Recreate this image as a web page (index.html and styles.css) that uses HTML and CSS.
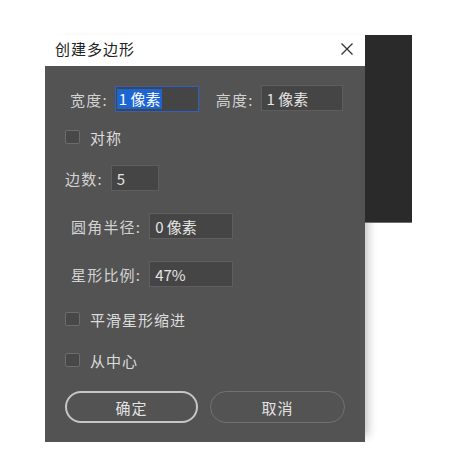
FILE: index.html
```html
<!DOCTYPE html>
<html lang="zh">
<head>
<meta charset="utf-8">
<title>创建多边形</title>
<link rel="stylesheet" href="styles.css">
</head>
<body>
<div class="stage">
  <div class="dialog">
    <div class="titlebar">
      <span class="title">创建多边形</span>
      <svg class="close" width="14" height="14" viewBox="0 0 14 14"><path d="M1.5 1.5 L12.5 12.5 M12.5 1.5 L1.5 12.5" stroke="#333" stroke-width="1.3" fill="none"/></svg>
    </div>
    <div class="panel">
      <div class="row row-size">
        <span class="label">宽度:</span>
        <div class="input w84 focused"><span class="sel">1&nbsp;像素</span></div>
        <span class="label lbl-h">高度:</span>
        <div class="input w82 shift-up">1&nbsp;像素</div>
      </div>
      <div class="check c1"><span class="box"></span><span class="ctext">对称</span></div>
      <div class="row r-sides">
        <span class="label">边数:</span>
        <div class="input w48 g8">5</div>
      </div>
      <div class="row r-radius">
        <span class="label l2">圆角半径:</span>
        <div class="input w84 g8">0&nbsp;像素</div>
      </div>
      <div class="row r-star">
        <span class="label l2">星形比例:</span>
        <div class="input w84 g8">47%</div>
      </div>
      <div class="check c2"><span class="box"></span><span class="ctext">平滑星形缩进</span></div>
      <div class="check c3"><span class="box"></span><span class="ctext">从中心</span></div>
      <div class="buttons">
        <div class="btn primary">确定</div>
        <div class="btn">取消</div>
      </div>
    </div>
  </div>
  <div class="dark"></div>
</div>
</body>
</html>
```
FILE: styles.css
```css
html, body {
  margin: 0;
  padding: 0;
  background: #ffffff;
}
body {
  font-family: "Noto Sans CJK SC", "Noto Sans", sans-serif;
}
.stage {
  display: flex;
  align-items: flex-start;
  padding: 35px 0 0 45px;
}
.dialog {
  width: 320px;
  position: relative;
  box-shadow: 9px 0 9px -6px rgba(0,0,0,0.25);
}
.dark {
  width: 47px;
  height: 188px;
  background: #2a2a2a;
  border-bottom: 1px solid #6d6d6d;
  box-sizing: border-box;
  position: relative;
}
.titlebar {
  height: 31px;
  background: #ffffff;
  display: flex;
  align-items: center;
  justify-content: space-between;
  padding: 0 11px 0 10px;
}
.title {
  font-size: 15px;
  color: #222;
  letter-spacing: 1px;
  margin-top: -4px;
}
.close {
  margin-top: -3px;
}
.panel {
  background: #535353;
  height: 376px;
  padding: 20px 0 0 20px;
  box-sizing: border-box;
}
.row {
  display: flex;
  align-items: center;
  height: 26px;
}
.row-size {
  margin-left: 5px;
}
.label {
  font-size: 15px;
  color: #d2d2d2;
  letter-spacing: 1.2px;
  white-space: nowrap;
}
.l2 {
  margin-left: 6px;
}
.lbl-h {
  margin-left: 17px;
}
.input {
  height: 26px;
  box-sizing: border-box;
  background: #454545;
  border: 1px solid #5e5e5e;
  color: #e6e6e6;
  font-size: 15px;
  display: flex;
  align-items: center;
  padding-left: 5px;
  margin-left: 7px;
  white-space: nowrap;
}
.shift-up {
  position: relative;
  top: -1px;
}
.w84 { width: 84px; }
.w82 { width: 82px; }
.w48 { width: 48px; }
.g8 { margin-left: 8px; }
.focused {
  border: 1.5px solid #2d61c4;
  padding-left: 1px;
}
.sel {
  background: #1c66d4;
  color: #ffffff;
  padding: 0 2px 0 2px;
  line-height: 20px;
}
.check {
  display: flex;
  align-items: center;
  height: 14px;
}
.box {
  width: 15px;
  height: 14px;
  box-sizing: border-box;
  border: 1px solid #6c6c6c;
  background: #484848;
  border-radius: 2px;
}
.ctext {
  font-size: 15px;
  color: #dcdcdc;
  margin-left: 10px;
  letter-spacing: 1px;
}
.c1 { margin-top: 18px; }
.r-sides { margin-top: 21px; }
.r-radius { margin-top: 22px; }
.r-star { margin-top: 22px; }
.c2 { margin-top: 25px; }
.c3 { margin-top: 27px; }
.buttons {
  display: flex;
  gap: 12px;
  margin-top: 24px;
}
.btn {
  width: 135px;
  height: 32px;
  box-sizing: border-box;
  border: 1.5px solid #717171;
  border-radius: 16px;
  display: flex;
  align-items: center;
  justify-content: center;
  font-size: 15px;
  color: #e2e2e2;
  letter-spacing: 1px;
}
.primary {
  width: 133px;
  border: 2px solid #c6c6c6;
}
```
